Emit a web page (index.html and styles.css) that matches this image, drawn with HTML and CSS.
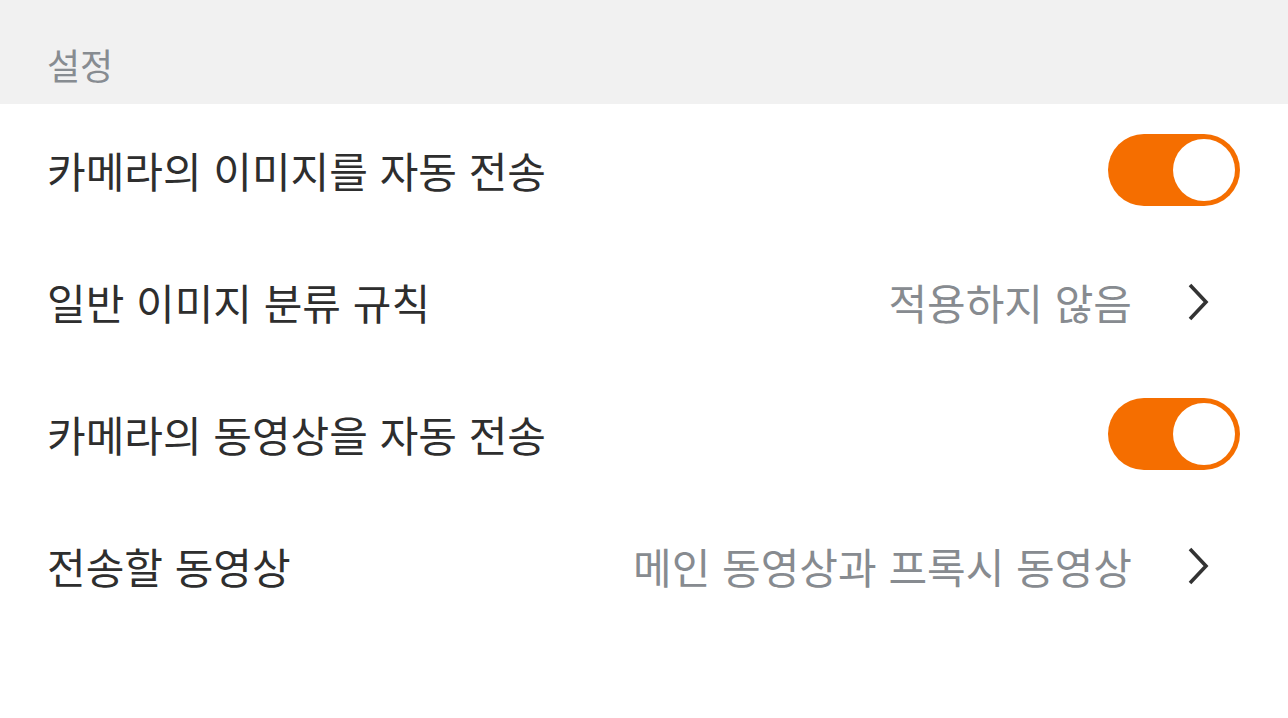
FILE: index.html
```html
<!DOCTYPE html>
<html lang="ko">
<head>
<meta charset="utf-8">
<link rel="stylesheet" href="styles.css">
</head>
<body>
<div class="page">
  <div class="section-header">설정</div>
  <div class="list">
    <div class="row">
      <div class="label">카메라의 이미지를 자동 전송</div>
      <div class="toggle on"><div class="knob"></div></div>
    </div>
    <div class="row">
      <div class="label">일반 이미지 분류 규칙</div>
      <div class="value">적용하지 않음</div>
      <svg class="chevron" width="24" height="40" viewBox="0 0 24 40"><path d="M4 3 L20 20 L4 37" fill="none" stroke="#333" stroke-width="3.6" stroke-linejoin="miter"/></svg>
    </div>
    <div class="row">
      <div class="label">카메라의 동영상을 자동 전송</div>
      <div class="toggle on"><div class="knob"></div></div>
    </div>
    <div class="row">
      <div class="label">전송할 동영상</div>
      <div class="value">메인 동영상과 프록시 동영상</div>
      <svg class="chevron" width="24" height="40" viewBox="0 0 24 40"><path d="M4 3 L20 20 L4 37" fill="none" stroke="#333" stroke-width="3.6" stroke-linejoin="miter"/></svg>
    </div>
  </div>
</div>
</body>
</html>
```
FILE: styles.css
```css
html, body {
  margin: 0;
  padding: 0;
  background: #ffffff;
}
body {
  font-family: "Noto Sans CJK KR", "Noto Sans", sans-serif;
  width: 1288px;
  height: 718px;
  overflow: hidden;
}
.section-header {
  height: 104px;
  background: #f1f1f1;
  color: #878c91;
  font-size: 36px;
  line-height: 1;
  padding: 24px 48px 0 47px;
  box-sizing: border-box;
  display: flex;
  align-items: center;
}
.row {
  height: 132px;
  display: flex;
  align-items: center;
  padding: 0 48px 0 47px;
}
.label {
  flex: 1;
  font-size: 42px;
  color: #2e2e2e;
  line-height: 1;
}
.value {
  font-size: 42px;
  color: #878b90;
  line-height: 1;
  margin-right: 54px;
}
.chevron {
  display: block;
  margin-right: 30px;
}
.toggle {
  width: 132px;
  height: 72px;
  border-radius: 36px;
  background: #f56e00;
  position: relative;
  box-sizing: border-box;
}
.knob {
  position: absolute;
  right: 5px;
  top: 5px;
  width: 62px;
  height: 62px;
  border-radius: 50%;
  background: #ffffff;
}
```
